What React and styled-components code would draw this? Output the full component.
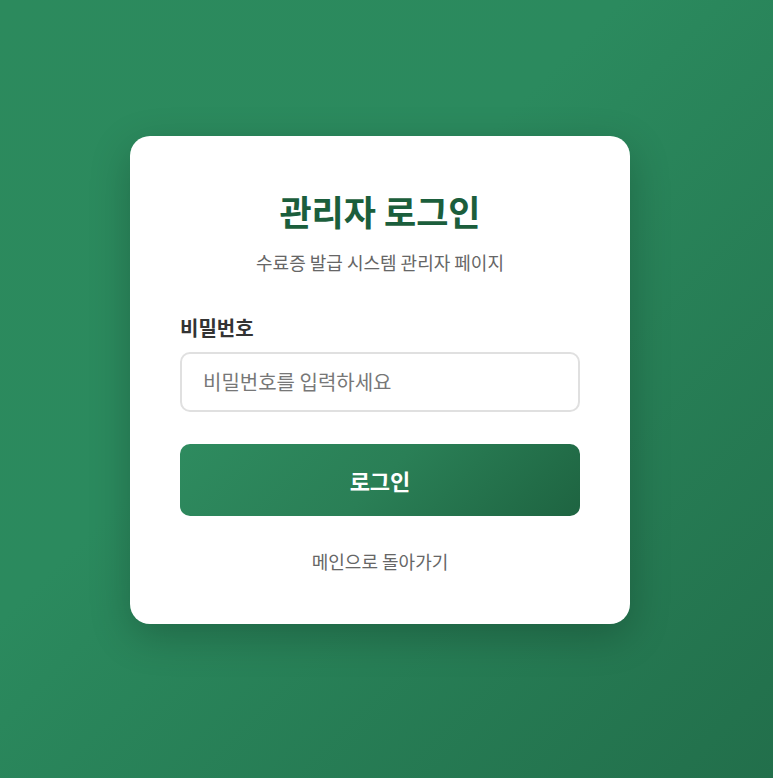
import React from 'react';
import styled, { createGlobalStyle } from 'styled-components';

const GlobalStyle = createGlobalStyle`
    * { box-sizing: border-box; }
    body {
        margin: 0;
        font-family: "Noto Sans CJK KR", "Noto Sans", sans-serif;
    }
`;

const Page = styled.div`
    min-height: 100vh;
    display: flex;
    align-items: center;
    justify-content: center;
    padding: 0 13px 18px 0;
    background: linear-gradient(135deg, #2c8a5d 0%, #2b8a5e 40%, #226f4b 100%);
`;

const Card = styled.div`
    width: 500px;
    background: #fff;
    border-radius: 20px;
    padding: 50px;
    box-shadow: 0 12px 40px rgba(0, 0, 0, 0.22);
`;

const Header = styled.div`
    text-align: center;
    margin-bottom: 38px;
`;

const Title = styled.h1`
    margin: 0 0 12px;
    font-size: 35px;
    font-weight: 700;
    color: #1b5e3c;
    line-height: 1.45;
`;

const Subtitle = styled.p`
    margin: 0;
    font-size: 18px;
    line-height: 1.45;
    color: #666;
`;

const Field = styled.div`
    display: flex;
    flex-direction: column;
    gap: 10px;
    margin-bottom: 32px;
`;

const Label = styled.label`
    font-size: 20px;
    font-weight: 700;
    line-height: 1.45;
    color: #333;
`;

const Input = styled.input`
    width: 100%;
    height: 60px;
    padding: 0 21px;
    border: 2px solid #e0e0e0;
    border-radius: 10px;
    font-family: inherit;
    font-size: 20px;
    color: #333;
    outline: none;

    &::placeholder {
        color: #777;
    }
`;

const Button = styled.button`
    width: 100%;
    height: 72px;
    border: none;
    border-radius: 10px;
    background: linear-gradient(135deg, #2e8b5f 0%, #2a7f56 50%, #1e6441 100%);
    color: #fff;
    font-family: inherit;
    font-size: 22px;
    font-weight: 700;
    cursor: pointer;
`;

const BackLink = styled.a`
    display: block;
    margin-top: 32px;
    text-align: center;
    font-size: 18px;
    line-height: 1.45;
    color: #666;
    text-decoration: none;
`;

export default function App() {
    return (
        <Page>
            <GlobalStyle />
            <Card>
                <Header>
                    <Title>관리자 로그인</Title>
                    <Subtitle>수료증 발급 시스템 관리자 페이지</Subtitle>
                </Header>
                <Field>
                    <Label htmlFor="pw">비밀번호</Label>
                    <Input id="pw" type="password" placeholder="비밀번호를 입력하세요" />
                </Field>
                <Button>로그인</Button>
                <BackLink href="#">메인으로 돌아가기</BackLink>
            </Card>
        </Page>
    );
}
